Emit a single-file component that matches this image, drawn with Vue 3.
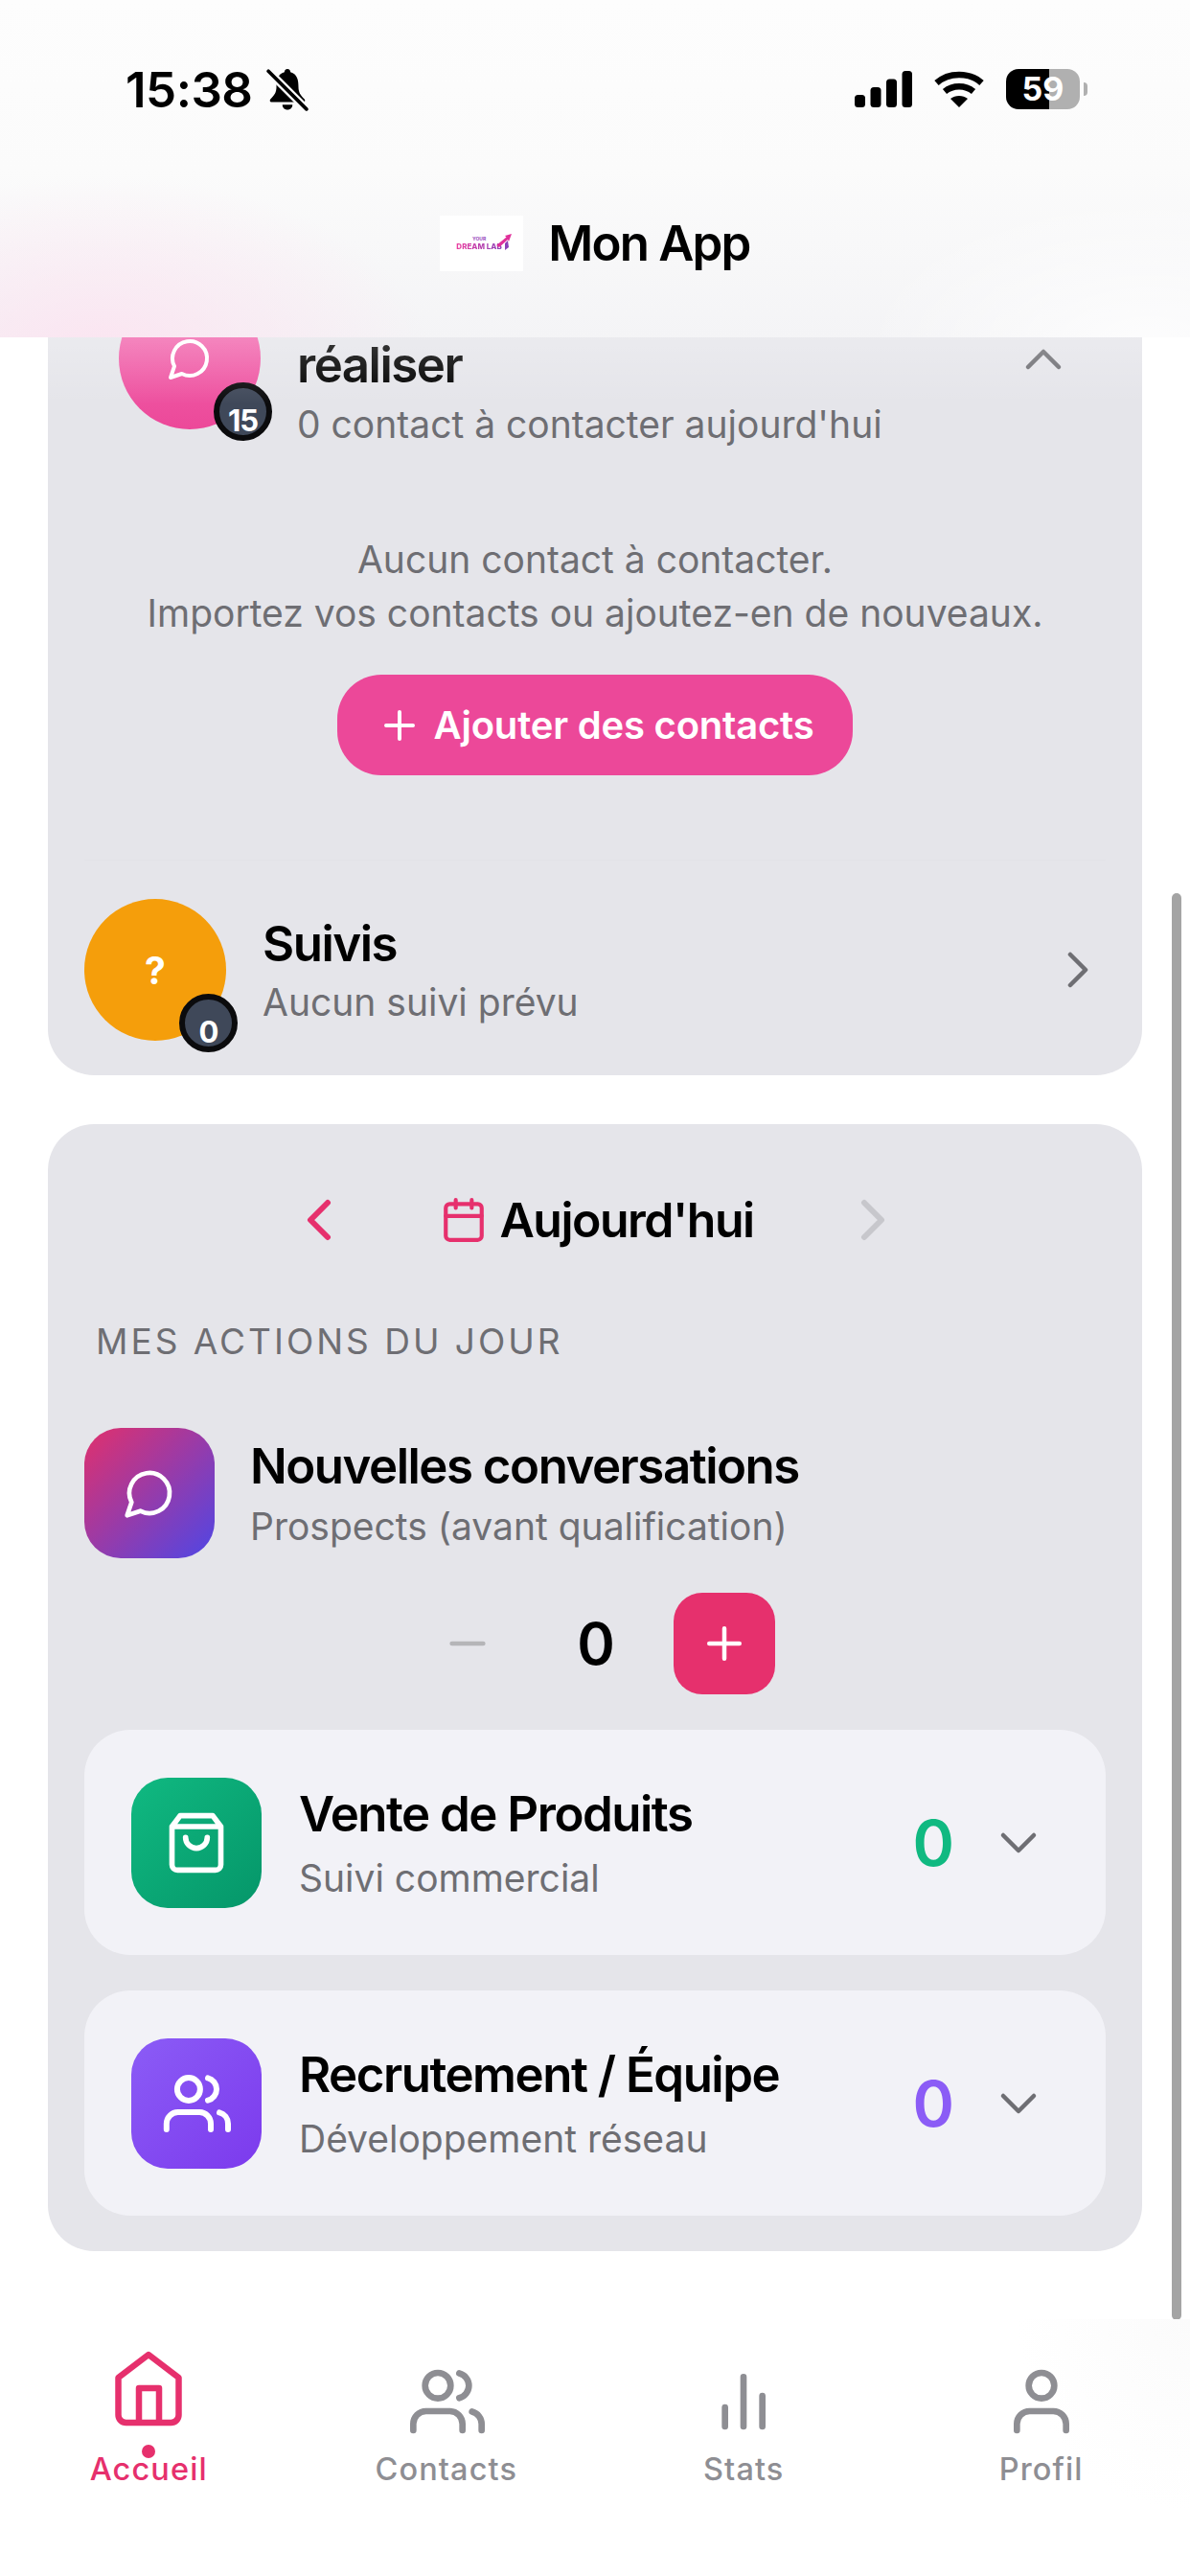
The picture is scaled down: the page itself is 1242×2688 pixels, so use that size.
<template>
  <div class="phone">
    <!-- scrolled content, the header and tab bar lie over it -->
    <main class="scroll">
      <section class="card card-top">
        <div class="head-row">
          <div class="avatar avatar-pink">
            <svg class="ico" width="48" height="48" viewBox="0 0 24 24"><path d="M7.9 20A9 9 0 1 0 4 16.1L2 22Z" /></svg>
            <span class="count-badge">15</span>
          </div>
          <div class="head-text">
            <div class="title">réaliser</div>
            <div class="sub">0 contact à contacter aujourd'hui</div>
          </div>
          <svg class="ico chevron chevron-up" width="64" height="64" viewBox="0 0 24 24"><path d="m18 15-6-6-6 6" /></svg>
        </div>

        <div class="empty">
          <p>Aucun contact à contacter.</p>
          <p>Importez vos contacts ou ajoutez-en de nouveaux.</p>
        </div>
        <button class="add-btn">
          <svg class="ico" width="48" height="48" viewBox="0 0 24 24"><path d="M5 12h14M12 5v14" /></svg>
          <span>Ajouter des contacts</span>
        </button>

        <div class="follow-row">
          <div class="avatar avatar-orange">
            <span class="question">?</span>
            <span class="count-badge">0</span>
          </div>
          <div class="head-text follow-text">
            <div class="title">Suivis</div>
            <div class="sub">Aucun suivi prévu</div>
          </div>
          <svg class="ico chevron" width="64" height="64" viewBox="0 0 24 24"><path d="m9 18 6-6-6-6" /></svg>
        </div>
      </section>

      <section class="card card-day">
        <div class="day-nav">
          <svg class="ico nav-prev" width="72" height="72" viewBox="0 0 24 24"><path d="m15 18-6-6 6-6" /></svg>
          <div class="day-label">
            <svg class="ico cal" width="50" height="50" viewBox="0 0 24 24">
              <path d="M8 2v4M16 2v4M3 10h18" />
              <rect x="3" y="4" width="18" height="18" rx="2" />
            </svg>
            <span>Aujourd'hui</span>
          </div>
          <svg class="ico nav-next" width="72" height="72" viewBox="0 0 24 24"><path d="m9 18 6-6-6-6" /></svg>
        </div>

        <div class="section-label">MES ACTIONS DU JOUR</div>

        <div class="action-row">
          <div class="tile tile-convo">
            <svg class="ico" width="56" height="56" viewBox="0 0 24 24"><path d="M7.9 20A9 9 0 1 0 4 16.1L2 22Z" /></svg>
          </div>
          <div class="action-text">
            <div class="title">Nouvelles conversations</div>
            <div class="sub">Prospects (avant qualification)</div>
          </div>
        </div>

        <div class="stepper">
          <div class="step-minus">
            <svg class="ico" width="56" height="56" viewBox="0 0 24 24"><path d="M5 12h14" /></svg>
          </div>
          <div class="step-count">{{ conversations }}</div>
          <div class="step-plus">
            <svg class="ico" width="54" height="54" viewBox="0 0 24 24"><path d="M5 12h14M12 5v14" /></svg>
          </div>
        </div>

        <div v-for="item in groups" :key="item.title" class="group-card">
          <div class="tile" :class="item.tile">
            <svg v-if="item.tile === 'tile-green'" class="ico" width="68" height="68" viewBox="0 0 24 24">
              <path d="M6 2 3 6v14a2 2 0 0 0 2 2h14a2 2 0 0 0 2-2V6l-3-4ZM3 6h18M16 10a4 4 0 0 1-8 0" />
            </svg>
            <svg v-else class="ico" width="72" height="72" viewBox="0 0 24 24">
              <path d="M1.6 21v-2a4 4 0 0 1 4-4h7.5a4 4 0 0 1 3.9 4v2M23 21v-2a4 4 0 0 0-3-3.87M16 3.13a4 4 0 0 1 0 7.75" />
              <circle cx="9.3" cy="7" r="4" />
            </svg>
          </div>
          <div class="group-text">
            <div class="title">{{ item.title }}</div>
            <div class="sub">{{ item.sub }}</div>
          </div>
          <div class="group-count" :class="item.countClass">0</div>
          <svg class="ico chevron" width="64" height="64" viewBox="0 0 24 24"><path d="m6 9 6 6 6-6" /></svg>
        </div>
      </section>
    </main>

    <div class="scrollbar"></div>

    <header class="top">
      <div class="status">
        <div class="status-left">
          <span class="time">15:38</span>
          <svg width="46" height="46" viewBox="0 0 44 44">
            <path d="M22 2c-2 0-3 1.400-3 3C12 7 11 13 11 20c0 5-2 8-6 12-1 1-.5 3 1 3h32c1.500 0 2-2 1-3-4-4-6-7-6-12 0-7-1-13-8-15 0-1.600-1-3-3-3Z" fill="#000" />
            <path d="M17 37.500h10c0 3-2 5-5 5s-5-2-5-5Z" fill="#000" />
            <path d="M3 4l38 38" stroke="#fbfbfb" stroke-width="8" />
            <path d="M3 4l38 38" stroke="#000" stroke-width="3.5" stroke-linecap="round" />
          </svg>
        </div>
        <div class="status-right">
          <svg width="60" height="38" viewBox="0 0 60 38" fill="#000">
            <rect x="0" y="25" width="11" height="13" rx="3.5" />
            <rect x="16.5" y="17" width="11" height="21" rx="3.5" />
            <rect x="33" y="8.5" width="11" height="29.5" rx="3.5" />
            <rect x="49.5" y="0" width="10.5" height="38" rx="3.5" />
          </svg>
          <svg class="wifi" width="54" height="38" viewBox="0 0 54 38" fill="none" stroke="#000" stroke-width="6.5">
            <path d="M3.500 12.500C16 1 38 1 50.500 12.500" />
            <path d="M12 21.500c8.500-7 21.500-7 30 0" />
            <path d="M27 38l-9-9c5-4 13-4 18 0Z" fill="#000" stroke="none" />
          </svg>
          <div class="battery"><span>59</span></div>
          <div class="battery-nub"></div>
        </div>
      </div>
      <div class="app-title">
        <div class="logo">
          <div class="logo-text">
            <span class="logo-your">YOUR</span>
            <span class="logo-dream">DREAM LAB</span>
          </div>
          <svg class="logo-rocket" width="16" height="17" viewBox="0 0 16 17"><path d="M16 0 9 2l1.500 1.500L0 12l3 2 9-8 1 2Z" fill="#e0309a" /><path d="M9 10l3-3 1 7-4 3Z" fill="#8a3fb8" /></svg>
        </div>
        <span>Mon App</span>
      </div>
    </header>

    <nav class="tabs">
      <div v-for="tab in tabs" :key="tab.label" class="tab" :class="{ active: tab.active }">
        <div class="tab-icon">
          <svg v-if="tab.id === 'home'" class="ico home" width="96" height="96" viewBox="0 0 96 96">
            <path d="M48 12 79.500 36v39a8 8 0 0 1-8 8h-47a8 8 0 0 1-8-8V36ZM38 83V47h21v36" />
          </svg>
          <svg v-else class="ico" width="80" height="80" viewBox="0 0 24 24">
            <template v-if="tab.id === 'contacts'">
              <path d="M1.6 21v-2a4 4 0 0 1 4-4h7.5a4 4 0 0 1 3.9 4v2M23 21v-2a4 4 0 0 0-3-3.87M16 3.13a4 4 0 0 1 0 7.75" />
              <circle cx="9.3" cy="7" r="4" />
            </template>
            <path v-else-if="tab.id === 'stats'" d="M6.2 19.800v-6M12 19.800V4.300M17.900 19.800v-9.600" />
            <template v-else>
              <path d="M4.3 21v-2a4 4 0 0 1 4-4h7.400a4 4 0 0 1 4 4v2" />
              <circle cx="12" cy="7" r="4" />
            </template>
          </svg>
        </div>
        <span v-if="tab.active" class="tab-dot"></span>
        <span class="tab-label">{{ tab.label }}</span>
      </div>
    </nav>
  </div>
</template>

<script setup>
import { ref } from 'vue'

const conversations = ref(0)

const groups = [
  { title: 'Vente de Produits', sub: 'Suivi commercial', tile: 'tile-green', countClass: 'count-green' },
  { title: 'Recrutement / Équipe', sub: 'Développement réseau', tile: 'tile-purple', countClass: 'count-purple' }
]

const tabs = [
  { id: 'home', label: 'Accueil', active: true },
  { id: 'contacts', label: 'Contacts' },
  { id: 'stats', label: 'Stats' },
  { id: 'profile', label: 'Profil' }
]
</script>

<style>
html,
body {
  margin: 0;
  background: #fff;
}
</style>

<style scoped>
.phone {
  position: relative;
  width: 1242px;
  height: 2688px;
  overflow: hidden;
  background: #fff;
  font-family: Inter, "Noto Sans", sans-serif;
  color: #000;
}

.ico {
  display: block;
  fill: none;
  stroke: currentColor;
  stroke-width: 2;
  stroke-linecap: round;
  stroke-linejoin: round;
  flex-shrink: 0;
}

.home {
  stroke-width: 6.5;
  margin-bottom: 5px;
}

.scroll {
  padding: 240px 50px 0;
}

.card {
  background: #e5e5ea;
  border-radius: 48px;
}

.card-top {
  padding: 60px 0 36px;
}

.head-row {
  display: flex;
  align-items: flex-start;
  padding: 0 74px;
}

.avatar {
  position: relative;
  display: flex;
  align-items: center;
  justify-content: center;
  width: 148px;
  height: 148px;
  border-radius: 50%;
  color: #fff;
  flex-shrink: 0;
}

.avatar-pink {
  background: linear-gradient(180deg, #f472b6, #ec4899);
}

.avatar-orange {
  background: #f59e0b;
}

.question {
  font-size: 39px;
  font-weight: 700;
}

.count-badge {
  position: absolute;
  right: -12px;
  bottom: -12px;
  display: flex;
  align-items: flex-end;
  justify-content: center;
  box-sizing: border-box;
  width: 61px;
  height: 61px;
  border: 6px solid #0b0b0d;
  border-radius: 50%;
  background: #3f4859;
  color: #fff;
  font-size: 31px;
  line-height: 30px;
  font-weight: 700;
  letter-spacing: -1px;
}

.head-text {
  margin: 51px 0 0 38px;
}

.title {
  font-size: 51px;
  line-height: 60px;
  font-weight: 600;
  letter-spacing: -1.5px;
}

.sub {
  margin-top: 9px;
  font-size: 39px;
  line-height: 46px;
  color: #6e6e73;
}

.chevron {
  color: #6e6e73;
  margin-left: auto;
  stroke-width: 1.7;
}

.chevron-up {
  margin-top: 43px;
  margin-right: -3px;
}

.empty {
  margin-top: 90px;
  text-align: center;
  color: #6e6e73;
  font-size: 39px;
  line-height: 56px;
}

.empty p {
  margin: 0;
}

.add-btn {
  display: flex;
  align-items: center;
  justify-content: center;
  gap: 12px;
  width: 538px;
  height: 105px;
  margin: 36px auto 0;
  padding: 0;
  border: none;
  border-radius: 46px;
  background: #ec4899;
  color: #fff;
  font-family: inherit;
  font-size: 40px;
  font-weight: 600;
  letter-spacing: -0.2px;
}

.follow-row {
  display: flex;
  align-items: center;
  margin: 88px 38px 0;
  padding-top: 40px;
  border-top: 1px solid #e2e2e7;
}

.follow-text {
  margin-top: 0;
}

.follow-text .sub {
  margin-top: 8px;
}

.follow-row .chevron {
  margin-right: -3px;
}

.card-day {
  margin-top: 51px;
  padding: 70px 38px 37px;
}

.day-nav {
  display: flex;
  align-items: center;
  justify-content: center;
  height: 60px;
  margin-left: 2px;
}

.nav-prev {
  color: #e6306d;
}

.nav-next {
  color: #c7c7cc;
}

.day-label {
  display: flex;
  align-items: center;
  gap: 12px;
  margin: 0 88px 0 90px;
  font-size: 50px;
  font-weight: 600;
  letter-spacing: -1.5px;
}

.cal {
  color: #e6306d;
}

.section-label {
  margin: 74px 0 0 12px;
  font-size: 37px;
  line-height: 46px;
  letter-spacing: 3px;
  color: #6e6e73;
}

.action-row {
  display: flex;
  align-items: center;
  gap: 37px;
  margin-top: 67px;
}

.action-text .sub {
  margin-top: 10px;
}

.tile {
  display: flex;
  align-items: center;
  justify-content: center;
  width: 136px;
  height: 136px;
  border-radius: 38px;
  color: #fff;
  flex-shrink: 0;
}

.tile-convo {
  background: linear-gradient(135deg, #e1306c, #4f46e5);
}

.tile-green {
  background: linear-gradient(135deg, #10b981, #059669);
}

.tile-purple {
  background: linear-gradient(135deg, #8b5cf6, #7c3aed);
}

.stepper {
  display: flex;
  align-items: center;
  justify-content: center;
  height: 106px;
  margin: 36px 0 0 2px;
}

.step-minus {
  display: flex;
  align-items: center;
  justify-content: center;
  width: 106px;
  color: #b5b5b8;
}

.step-count {
  width: 162px;
  text-align: center;
  font-size: 60px;
  font-weight: 600;
}

.step-plus {
  display: flex;
  align-items: center;
  justify-content: center;
  width: 106px;
  height: 106px;
  border-radius: 30px;
  background: #e6306d;
  color: #fff;
}

.group-card {
  display: flex;
  align-items: center;
  margin-top: 37px;
  padding: 50px 72px 49px 49px;
  border-radius: 48px;
  background: #f2f2f7;
}

.group-text {
  margin-left: 39px;
}

.group-text .sub {
  margin-top: 14px;
}

.group-count {
  margin-left: auto;
  font-size: 66px;
  font-weight: 600;
}

.group-card .chevron {
  margin-left: 35px;
  margin-right: -13px;
}

.count-green {
  color: #10b981;
}

.count-purple {
  color: #8b5cf6;
}

.scrollbar {
  position: absolute;
  top: 932px;
  left: 1223px;
  width: 10px;
  height: 1489px;
  border-radius: 5px;
  background: #a4a4a4;
}

.top {
  position: absolute;
  top: 0;
  left: 0;
  right: 0;
  height: 352px;
  background:
    radial-gradient(ellipse 340px 190px at 110px 375px, rgba(252, 226, 240, 0.9), rgba(252, 226, 240, 0) 100%),
    radial-gradient(ellipse 300px 160px at 1200px 360px, rgba(255, 255, 255, 0.8), rgba(255, 255, 255, 0) 100%),
    linear-gradient(180deg, #fdfdfd 0%, #fbfbfb 50%, #f4f4f6 100%);
}

.top::after {
  content: "";
  position: absolute;
  top: 100%;
  left: 0;
  right: 0;
  height: 70px;
  background: linear-gradient(180deg, rgba(255, 255, 255, 0.22), rgba(255, 255, 255, 0));
}

.status {
  display: flex;
  align-items: center;
  justify-content: space-between;
  height: 50px;
  padding: 68px 107px 0 131px;
}

.status-left {
  display: flex;
  align-items: center;
  gap: 13px;
}

.time {
  font-size: 51px;
  font-weight: 600;
  letter-spacing: -0.5px;
}

.status-right {
  display: flex;
  align-items: center;
}

.wifi {
  margin: 0 22px;
}

.battery {
  width: 77px;
  height: 42px;
  border-radius: 13px;
  background: linear-gradient(90deg, #000 58%, #b0b0b0 58%);
  color: #fff;
  font-size: 34px;
  line-height: 42px;
  font-weight: 700;
  text-align: center;
}

.battery-nub {
  width: 4px;
  height: 14px;
  margin-left: 4px;
  border-radius: 0 4px 4px 0;
  background: #b0b0b0;
}

.app-title {
  display: flex;
  align-items: center;
  justify-content: center;
  gap: 26px;
  margin-top: 105px;
  font-size: 51px;
  font-weight: 600;
  letter-spacing: -1.8px;
}

.logo {
  position: relative;
  display: flex;
  align-items: center;
  width: 87px;
  height: 58px;
  padding-left: 17px;
  box-sizing: border-box;
  background: #fff;
}

.logo-text {
  display: flex;
  flex-direction: column;
  align-items: center;
  font-weight: 800;
  letter-spacing: 0;
}

.logo-your {
  font-size: 5px;
  line-height: 7px;
  color: #a35bc4;
}

.logo-dream {
  font-size: 8px;
  line-height: 8px;
  background: linear-gradient(90deg, #ec3fa0, #8a3fb8);
  -webkit-background-clip: text;
  background-clip: text;
  color: transparent;
  white-space: nowrap;
}

.logo-rocket {
  position: absolute;
  top: 19px;
  left: 59px;
}

.tabs {
  position: absolute;
  left: 0;
  right: 0;
  top: 2420px;
  bottom: 0;
  display: grid;
  grid-template-columns: repeat(4, 1fr);
  align-content: start;
  padding-top: 25px;
  background: radial-gradient(ellipse 180px 200px at 1242px 0, #fbfbfb, #fff 100%);
}

.tab {
  position: relative;
  display: flex;
  flex-direction: column;
  align-items: center;
  color: #8e8e93;
}

.tab.active {
  color: #e6306d;
}

.tab-icon {
  display: flex;
  align-items: flex-end;
  height: 101px;
}

.tab-dot {
  position: absolute;
  top: 106px;
  left: 50%;
  width: 14px;
  height: 14px;
  margin-left: -7px;
  border-radius: 50%;
  background: #e6306d;
}

.tab-label {
  margin-top: 11px;
  font-size: 32.5px;
  line-height: 40px;
  font-weight: 500;
  letter-spacing: 1.1px;
}
</style>
